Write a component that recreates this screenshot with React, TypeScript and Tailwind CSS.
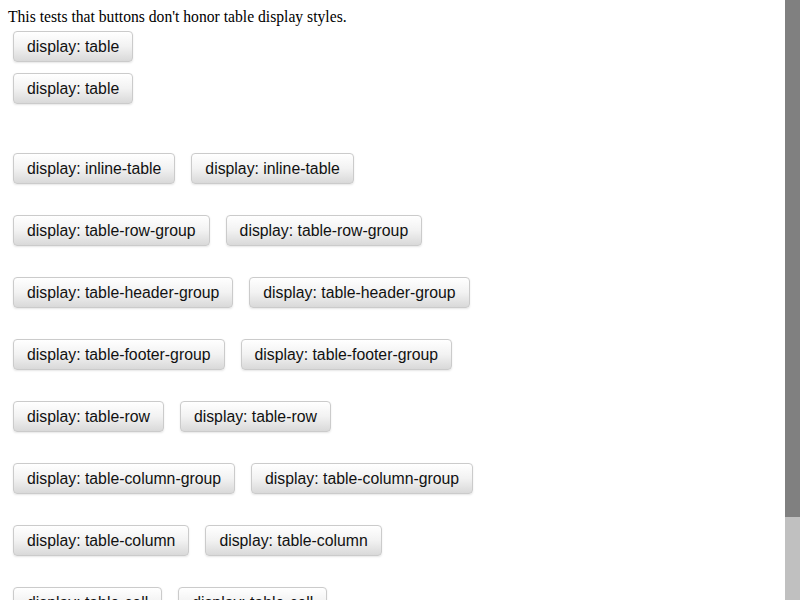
import React from "react";

const rows = [
  "inline-table",
  "table-row-group",
  "table-header-group",
  "table-footer-group",
  "table-row",
  "table-column-group",
  "table-column",
  "table-cell",
];

const Btn = ({ label }: { label: string }) => (
  <button
    type="button"
    className="h-[31px] w-fit whitespace-nowrap rounded-[4px] border border-[#cbcbcb] bg-gradient-to-b from-white via-[#f2f2f2] to-[#d9d9d9] px-[13px] font-['Liberation_Sans',Arial,sans-serif] text-[15.8px] leading-[18px] text-[#111] shadow-[0_1px_2px_rgba(0,0,0,0.1)]"
  >
    {label}
  </button>
);

export default function App() {
  return (
    <div className="flex h-[600px] w-[800px] overflow-hidden bg-white">
      <div className="flex-1 overflow-hidden pt-2">
        <p className="pl-2 font-['Liberation_Serif','Times_New_Roman',serif] text-[15.65px] leading-[18px] text-black">
          This tests that buttons don't honor table display styles.
        </p>

        {/* display: table -> block */}
        <div className="flex flex-col gap-[11px] pl-[13px] pt-[5px]">
          <Btn label="display: table" />
          <Btn label="display: table" />
        </div>

        <div className="mt-[49px] flex flex-col gap-[31px] pl-[13px]">
          {rows.map((r) => (
            <div key={r} className="flex gap-4">
              <Btn label={`display: ${r}`} />
              <Btn label={`display: ${r}`} />
            </div>
          ))}
        </div>
      </div>

      {/* scrollbar */}
      <div className="flex w-[15px] flex-col">
        <div className="h-[517px] bg-[#808080]" />
        <div className="flex-1 bg-[#c0c0c0]" />
      </div>
    </div>
  );
}
